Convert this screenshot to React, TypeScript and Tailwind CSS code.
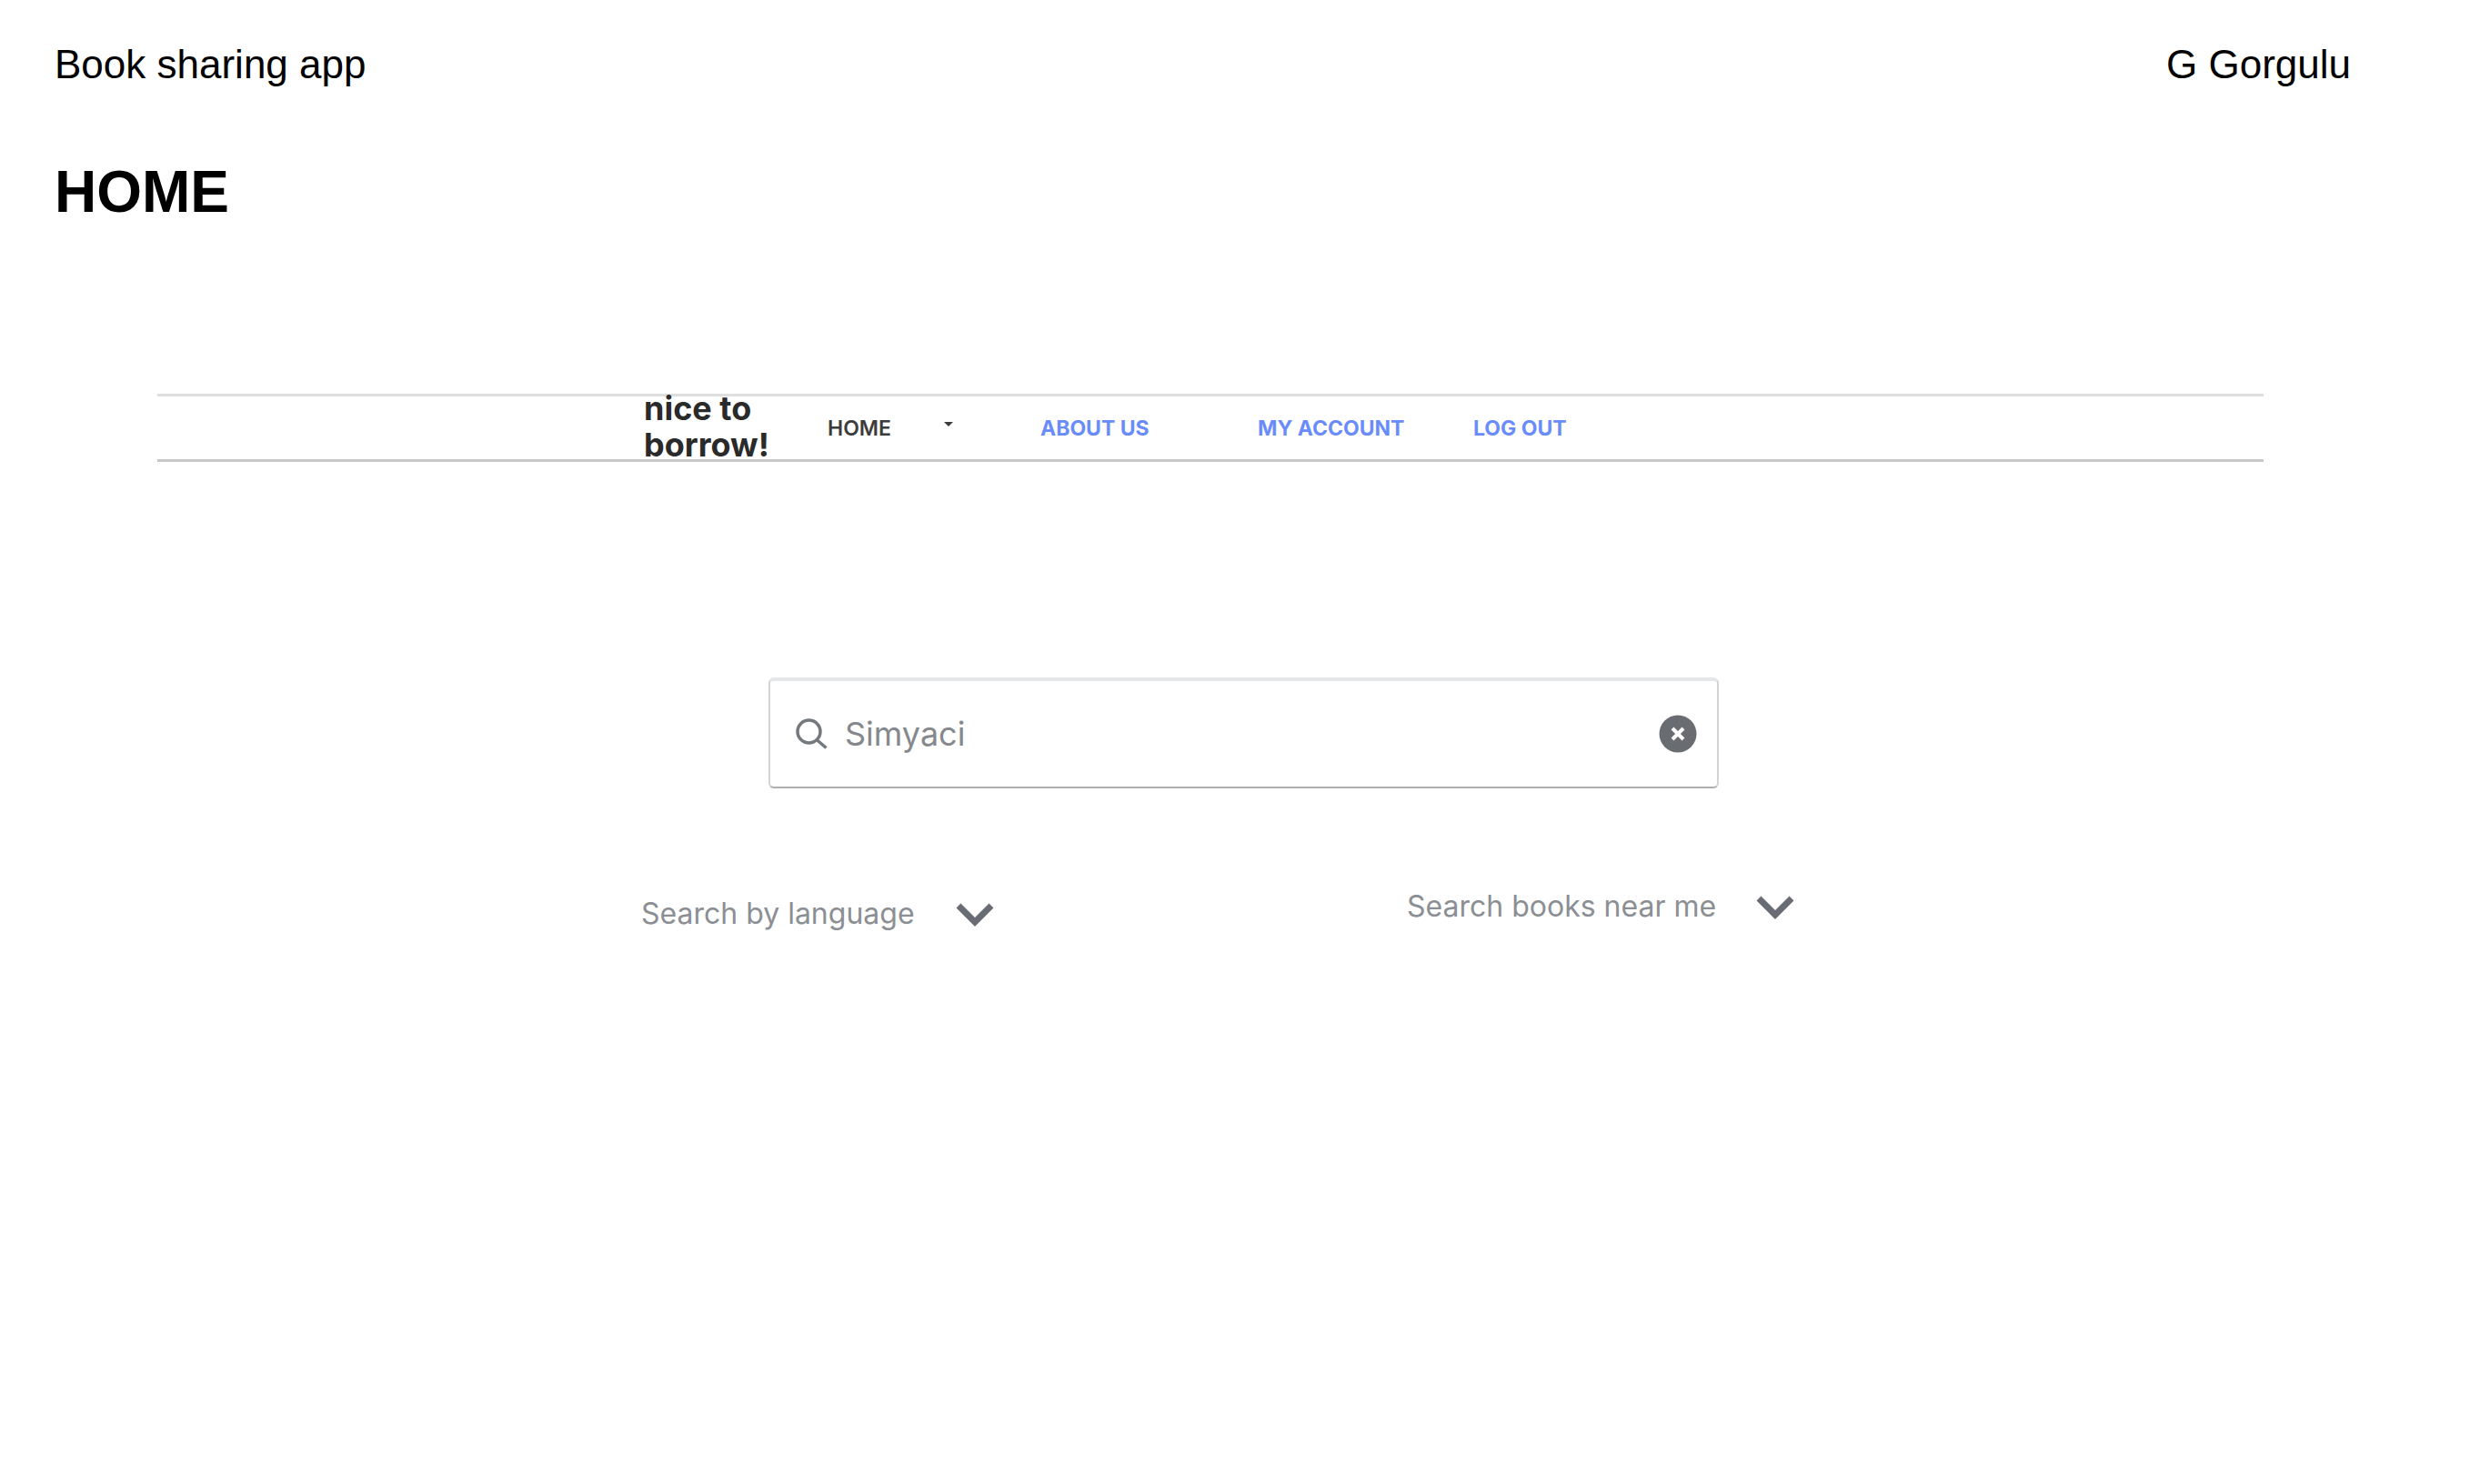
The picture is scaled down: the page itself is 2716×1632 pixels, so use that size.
import { useState } from "react";

const navLink = "text-[23px] leading-8 font-bold text-[#6a8cfb] whitespace-nowrap";

function Chevron() {
  return (
    <svg className="pointer-events-none h-[27px] w-[42px]" viewBox="0 0 42 27" fill="none" aria-hidden="true">
      <path d="M3 4 L21 22 L39 4" stroke="#686d73" strokeWidth="7" />
    </svg>
  );
}

function Dropdown({ label, wide }: { label: string; wide?: boolean }) {
  return (
    <div className="flex items-center">
      <select
        aria-label={label}
        className={
          wide
            ? "w-[384px] appearance-none bg-transparent text-[32px] leading-[50px] text-[#8b8f94]"
            : "w-[346px] appearance-none bg-transparent text-[32px] leading-[50px] text-[#8b8f94]"
        }
      >
        <option>{label}</option>
      </select>
      <Chevron />
    </div>
  );
}

export default function App() {
  const [query, setQuery] = useState("Simyaci");

  return (
    <div className="min-h-screen bg-white font-['Liberation_Sans',Arial,sans-serif] text-black">
      <header className="pt-[46px] pr-[131px] pl-[60px]">
        <div className="flex justify-between text-[44px] leading-[50px]">
          <p>Book sharing app</p>
          <p>G Gorgulu</p>
        </div>
        <h1 className="mt-[78px] text-[64px] leading-[74px] font-bold">HOME</h1>
      </header>

      <main className="mt-[185px] pr-[227px] pl-[173px] font-['Inter',sans-serif]">
        <nav className="flex justify-center border-t-3 border-b-3 border-t-[#dedede] border-b-[#c8c8c8]">
          <div className="flex h-[69px] w-[1246px] items-center">
            <p className="w-[202px] pb-1 text-[36px] leading-10 font-bold text-[#2a2a2a]">
              nice to
              <br />
              borrow!
            </p>
            <div className="flex w-[234px] items-center gap-[58px]">
              <a href="#home" className="text-[23px] leading-8 font-semibold text-[#3c3c3c]">
                HOME
              </a>
              <button type="button" aria-label="Open home menu" className="flex h-8 items-center pb-2">
                <svg className="h-[5px] w-[10px]" viewBox="0 0 10 5" aria-hidden="true">
                  <path d="M0 0 H10 L5 5 Z" fill="#3c3c3c" />
                </svg>
              </button>
            </div>
            <div className="w-[239px]">
              <a href="#about" className={navLink}>ABOUT US</a>
            </div>
            <div className="w-[237px]">
              <a href="#account" className={navLink}>MY ACCOUNT</a>
            </div>
            <a href="#logout" className={navLink}>LOG OUT</a>
          </div>
        </nav>

        <section className="mx-auto mt-[237px] w-[1284px] pl-4">
          <form
            role="search"
            onSubmit={(e) => e.preventDefault()}
            className="mr-[83px] ml-[140px] flex h-[122px] items-center rounded-md border-x-2 border-t-4 border-b-2 border-x-[#d2d4d5] border-t-[#e4e6e8] border-b-[#adafb1] pr-[22px] pl-7"
          >
            <svg className="h-[34px] w-[36px] shrink-0" viewBox="0 0 36 34" fill="none" aria-hidden="true">
              <circle cx="14.500" cy="14.500" r="12.500" stroke="#74797e" strokeWidth="3.500" />
              <path d="M23 23.500 L33.500 32.500" stroke="#74797e" strokeWidth="3.500" />
            </svg>
            <input
              type="text"
              aria-label="Search books"
              value={query}
              onChange={(e) => setQuery(e.target.value)}
              className="ml-[10px] min-w-0 grow bg-transparent px-2 text-[36px] leading-[56px] text-[#85898d] outline-none"
            />
            <button type="button" aria-label="Clear search" onClick={() => setQuery("")} className="shrink-0">
              <svg className="h-[42px] w-[42px]" viewBox="0 0 42 42" aria-hidden="true">
                <circle cx="21" cy="21" r="20.500" fill="#696d72" />
                <path d="M15 15 L27 27 M27 15 L15 27" stroke="#fff" strokeWidth="4" />
              </svg>
            </button>
          </form>

          <div className="mt-[105px] flex items-start justify-between">
            <div className="pt-2">
              <Dropdown label="Search by language" />
            </div>
            <Dropdown label="Search books near me" wide />
          </div>
        </section>
      </main>
    </div>
  );
}
